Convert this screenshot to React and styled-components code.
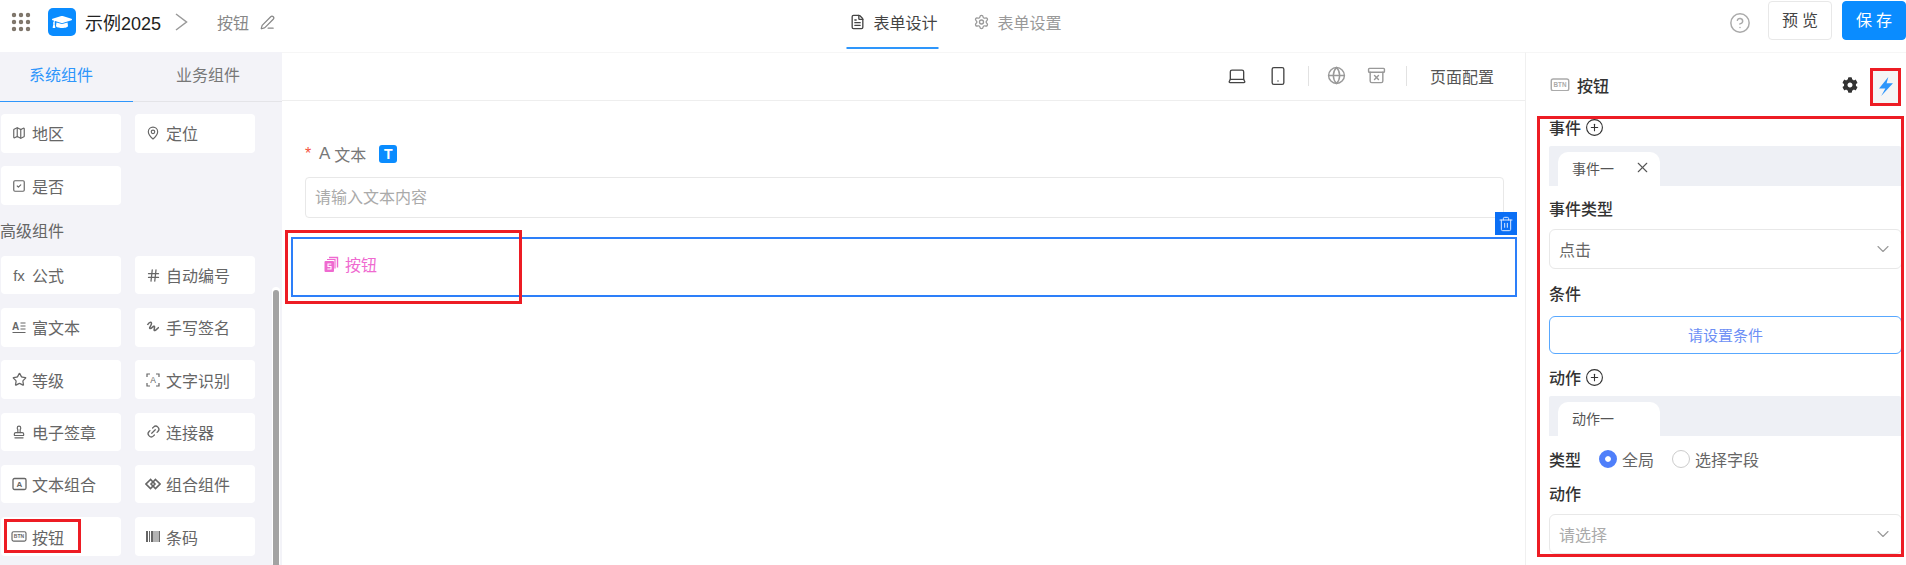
import styled, { createGlobalStyle } from 'styled-components'
import {
  Grip, ChevronDown, PenLine, FileText, Settings, CircleHelp, Laptop, Smartphone,
  Globe, ArchiveX, Map as MapIcon, MapPin, SquareCheck, Hash, Star, Stamp, Link2,
  X, CirclePlus, Trash2,
} from 'lucide-react'
import { FaGraduationCap, FaCog } from 'react-icons/fa'

const BtnIcon = ({ width = 14 }) => (
  <svg width={width} height={width * 0.68} viewBox="0 0 20 14">
    <rect x="1" y="1" width="18" height="12" rx="2" fill="none" stroke="currentColor" strokeWidth="1.5" />
    <text x="10" y="9.6" fontSize="6.5" fontWeight="700" textAnchor="middle" fill="currentColor" fontFamily="Liberation Sans">BTN</text>
  </svg>
)

const RichIcon = () => (
  <svg width="14" height="14" viewBox="0 0 14 14">
    <text x="0" y="9.5" fontSize="10" fontWeight="700" fill="currentColor" fontFamily="Liberation Sans">A</text>
    <path d="M8.5 3h5M8.5 6h5M8.5 9h5M0.5 12.5h13" stroke="currentColor" strokeWidth="1.2" fill="none" />
  </svg>
)

const BoxAIcon = () => (
  <svg width="15" height="14" viewBox="0 0 15 14">
    <rect x="1" y="1.5" width="13" height="11" rx="1.5" fill="none" stroke="currentColor" strokeWidth="1.3" />
    <text x="7.5" y="10" fontSize="8" fontWeight="700" textAnchor="middle" fill="currentColor" fontFamily="Liberation Sans">A</text>
  </svg>
)

const OcrIcon = () => (
  <svg width="14" height="14" viewBox="0 0 14 14">
    <path d="M1 4V1h3M10 1h3v3M13 10v3h-3M4 13H1v-3" fill="none" stroke="currentColor" strokeWidth="1.2" />
    <text x="7" y="10.2" fontSize="8.5" textAnchor="middle" fill="currentColor" fontFamily="Liberation Sans">A</text>
  </svg>
)

const SignIcon = () => (
  <svg width="14" height="14" viewBox="0 0 14 14" fill="none" stroke="currentColor" strokeWidth="1.5">
    <path d="M1.5 5C3 2 5.5 1.5 5.5 3.5S2.5 8 4 8.5 8 5 8.5 6.5 7 11 9 10.5s2.5-3 4-3" />
  </svg>
)

const LinkedIcon = () => (
  <svg width="16" height="12" viewBox="0 0 16 12" fill="none" stroke="currentColor" strokeWidth="1.6">
    <path d="M5.5 1.5 1 6l4.5 4.5L10 6z" />
    <path d="M10.5 1.5 15 6l-4.5 4.5L6 6z" />
  </svg>
)

const BarsIcon = () => (
  <svg width="14" height="11" viewBox="0 0 14 11" fill="currentColor">
    <path d="M0 0h2v11H0zM3 0h1v11H3zM5 0h2.5v11H5zM8.5 0h1v11h-1zM10.5 0h1v11h-1zM12.5 0H14v11h-1.5z" />
  </svg>
)

const PagesIcon = () => (
  <svg width="15" height="17" viewBox="0 0 15 17">
    <path d="M5 1.5h8.5v10" fill="none" stroke="#ef6ad0" strokeWidth="1.4" />
    <path d="M3 3.5h8v9" fill="none" stroke="#ef6ad0" strokeWidth="1.2" />
    <rect x="0.5" y="5" width="9.5" height="11" rx="1" fill="#ef6ad0" />
    <path d="M7.3 8H4v2.5h3V13H3.3" fill="none" stroke="#fff" strokeWidth="1.1" />
  </svg>
)

const CrumbArrow = () => (
  <svg width="13" height="18" viewBox="0 0 13 18" fill="none" stroke="currentColor" strokeWidth="1.5">
    <path d="M1 1l10.5 8L1 17" />
  </svg>
)

const BoltIcon = () => (
  <svg width="14" height="19" viewBox="0 0 11 15" style={{ flex: 'none' }}>
    <path d="M7.3 0 0 9h5l-3.3 6L11 5H6z" fill="#2e96fb" />
  </svg>
)

const App = () => {
  const basicItems = [
    { label: '地区', icon: <MapIcon size={14} /> },
    { label: '定位', icon: <MapPin size={14} /> },
    { label: '是否', icon: <SquareCheck size={14} /> },
  ]

  const advancedItems = [
    { label: '公式', icon: <FxMark>fx</FxMark> },
    { label: '自动编号', icon: <Hash size={15} /> },
    { label: '富文本', icon: <RichIcon /> },
    { label: '手写签名', icon: <SignIcon /> },
    { label: '等级', icon: <Star size={15} /> },
    { label: '文字识别', icon: <OcrIcon /> },
    { label: '电子签章', icon: <Stamp size={14} /> },
    { label: '连接器', icon: <Link2 size={15} style={{ transform: 'rotate(-45deg)' }} /> },
    { label: '文本组合', icon: <BoxAIcon /> },
    { label: '组合组件', icon: <LinkedIcon /> },
    { label: '按钮', icon: <BtnIcon width={16} />, marked: true },
    { label: '条码', icon: <BarsIcon /> },
  ]

  const renderCard = (item) => (
    <Card key={item.label}>
      <CardIcon>{item.icon}</CardIcon>
      {item.label}
      {item.marked && <RedMark $left={3} $top={2} $width={77} $height={34} />}
    </Card>
  )

  return (
    <Page>
      <GlobalStyle />
      <Header>
        <Brand>
          <AppsIcon><Grip size={24} strokeWidth={2.4} /></AppsIcon>
          <Logo><FaGraduationCap size={20} /></Logo>
          <Title>示例2025</Title>
          <Crumb><CrumbArrow /></Crumb>
          <CrumbText>按钮</CrumbText>
          <EditIcon><PenLine size={15} /></EditIcon>
        </Brand>
        <CenterTabs>
          <TopTab $active><FileText size={16} />表单设计</TopTab>
          <TopTab><Settings size={16} />表单设置</TopTab>
        </CenterTabs>
        <Actions>
          <HelpIcon><CircleHelp size={22} strokeWidth={1.6} /></HelpIcon>
          <HeadButton>预览</HeadButton>
          <HeadButton $primary>保存</HeadButton>
        </Actions>
      </Header>

      <Main>
        <Sidebar>
          <SideTabs>
            <SideTab $active>系统组件</SideTab>
            <SideTab>业务组件</SideTab>
          </SideTabs>
          <CardGrid>{basicItems.map(renderCard)}</CardGrid>
          <GroupTitle>高级组件</GroupTitle>
          <CardGrid>{advancedItems.map(renderCard)}</CardGrid>
          <ScrollThumb />
        </Sidebar>

        <Canvas>
          <Toolbar>
            <ToolIcon><Laptop size={20} strokeWidth={1.6} /></ToolIcon>
            <ToolIcon><Smartphone size={20} strokeWidth={1.6} /></ToolIcon>
            <ToolSep />
            <ToolIcon $muted><Globe size={19} strokeWidth={1.8} /></ToolIcon>
            <ToolIcon $muted><ArchiveX size={19} strokeWidth={1.8} /></ToolIcon>
            <ToolSep />
            <ToolText>页面配置</ToolText>
          </Toolbar>
          <FormBody>
            <Field>
              <FieldLabel>
                <Required>*</Required>
                <LabelGlyph>A</LabelGlyph>
                文本
                <TypeBadge>T</TypeBadge>
              </FieldLabel>
              <TextInput>请输入文本内容</TextInput>
            </Field>
            <SelectedBlock>
              <DeleteBadge><Trash2 size={16} strokeWidth={1.5} /></DeleteBadge>
              <PinkLabel><PagesIcon />按钮</PinkLabel>
              <RedMark $left={-8} $top={-9} $width={237} $height={74} />
            </SelectedBlock>
          </FormBody>
        </Canvas>

        <Panel>
          <PanelHead>
            <PanelIcon><BtnIcon width={20} /></PanelIcon>
            <PanelTitle>按钮</PanelTitle>
            <GearIcon><FaCog size={16} /></GearIcon>
            <BoltBox><BoltIcon /></BoltBox>
          </PanelHead>
          <PanelBody>
            <SectionRow $top={-2}>事件<CirclePlus size={19} strokeWidth={1.4} /></SectionRow>
            <TabStrip>
              <StripTab>事件一<X size={17} strokeWidth={1.5} /></StripTab>
            </TabStrip>
            <SectionRow $top={12} $bottom={11}>事件类型</SectionRow>
            <SelectBox>点击<ChevronDown size={20} strokeWidth={1.3} /></SelectBox>
            <SectionRow $top={14} $bottom={13}>条件</SectionRow>
            <OutlineButton>请设置条件</OutlineButton>
            <SectionRow $top={13}>动作<CirclePlus size={19} strokeWidth={1.4} /></SectionRow>
            <TabStrip>
              <StripTab>动作一</StripTab>
            </TabStrip>
            <RadioRow>
              <RadioTitle>类型</RadioTitle>
              <RadioDot $on />全局
              <RadioDot />选择字段
            </RadioRow>
            <SectionRow $top={12} $bottom={11}>动作</SectionRow>
            <SelectBox $placeholder>请选择<ChevronDown size={20} strokeWidth={1.3} /></SelectBox>
          </PanelBody>
        </Panel>
      </Main>
    </Page>
  )
}

const GlobalStyle = createGlobalStyle`
  html, body { margin: 0; padding: 0; background: #fff; }
  body { font-family: "Liberation Sans", "Noto Sans CJK SC", sans-serif; color: #666; }
  * { box-sizing: border-box; }
`

const Page = styled.div`
  width: 1906px;
  height: 565px;
  overflow: hidden;
  display: flex;
  flex-direction: column;
`

const Header = styled.header`
  height: 52px;
  flex: none;
  display: grid;
  grid-template-columns: 1fr auto 1fr;
  align-items: center;
`

const Brand = styled.div`
  display: flex;
  align-items: center;
  padding-bottom: 8px;
`

const AppsIcon = styled.span`
  display: flex;
  margin-left: 9px;
  color: #7d7469;
`

const Logo = styled.span`
  width: 28px;
  height: 28px;
  margin-left: 15px;
  border-radius: 5px;
  background: #0a8cff;
  color: #fff;
  display: flex;
  align-items: center;
  justify-content: center;
`

const Title = styled.span`
  margin-left: 9px;
  font-size: 18px;
  color: #222;
`

const Crumb = styled.span`
  display: flex;
  margin-left: 14px;
  color: #999;
`

const CrumbText = styled.span`
  margin-left: 29px;
  font-size: 16px;
  color: #888;
`

const EditIcon = styled.span`
  display: flex;
  margin-left: 11px;
  color: #888;
`

const CenterTabs = styled.nav`
  display: flex;
  gap: 32px;
  height: 100%;
  transform: translateX(1.5px);
`

const TopTab = styled.div`
  display: flex;
  align-items: center;
  gap: 8px;
  padding: 0 1px 4px 3px;
  font-size: 16px;
  color: ${(p) => (p.$active ? '#444' : '#999')};
  border-bottom: 2px solid ${(p) => (p.$active ? '#2e96fb' : 'transparent')};
  height: 49px;
`

const Actions = styled.div`
  display: flex;
  align-items: center;
  justify-content: flex-end;
  height: 100%;
  padding-bottom: 12px;
`

const HelpIcon = styled.span`
  display: flex;
  margin-right: 17px;
  margin-top: 6px;
  color: #aaa;
`

const HeadButton = styled.button`
  width: 64px;
  height: 39px;
  margin-left: ${(p) => (p.$primary ? '10px' : '0')};
  border: 1px solid ${(p) => (p.$primary ? '#0a8cff' : '#e8e8e8')};
  border-radius: 4px;
  background: ${(p) => (p.$primary ? '#0a8cff' : '#fff')};
  color: ${(p) => (p.$primary ? '#fff' : '#444')};
  font: 16px "Liberation Sans", "Noto Sans CJK SC", sans-serif;
  letter-spacing: 4px;
  padding: 0 0 2px 4px;
`

const Main = styled.main`
  flex: 1;
  min-height: 0;
  display: flex;
`

const Sidebar = styled.aside`
  position: relative;
  width: 282px;
  flex: none;
  background: #f3f3f8;
  overflow: hidden;
`

const SideTabs = styled.div`
  display: flex;
  height: 50px;
  border-bottom: 1px solid #e4e4e8;
  margin-bottom: 12px;
`

const SideTab = styled.div`
  width: 133px;
  height: 50px;
  padding-left: ${(p) => (p.$active ? '29px' : '43px')};
  font-size: 16px;
  line-height: 47px;
  color: ${(p) => (p.$active ? '#2e96fb' : '#777')};
  border-bottom: 1px solid ${(p) => (p.$active ? '#2e96fb' : 'transparent')};
`

const CardGrid = styled.div`
  display: grid;
  grid-template-columns: 120px 120px;
  gap: 13.8px 14px;
  padding-left: 1px;
`

const Card = styled.div`
  position: relative;
  height: 38.5px;
  display: flex;
  align-items: center;
  background: #fff;
  border-radius: 4px;
  font-size: 16px;
  color: #666;
`

const CardIcon = styled.span`
  width: 31px;
  flex: none;
  display: flex;
  justify-content: center;
  padding-left: 5px;
  color: #666;
`

const FxMark = styled.span`
  font-size: 15px;
  line-height: 1;
`

const GroupTitle = styled.div`
  font-size: 16px;
  line-height: 24px;
  margin: 15px 0 12px;
  color: #666;
`

const ScrollThumb = styled.div`
  position: absolute;
  right: 3px;
  top: 238px;
  bottom: 0;
  width: 6px;
  border-radius: 3px 3px 0 0;
  background: #a3a3a3;
  box-shadow: 0 -2px 0 1px #fff;
`

const RedMark = styled.span`
  position: absolute;
  left: ${(p) => p.$left}px;
  top: ${(p) => p.$top}px;
  width: ${(p) => p.$width}px;
  height: ${(p) => p.$height}px;
  border: 3px solid #ed1c24;
  pointer-events: none;
`

const Canvas = styled.section`
  flex: 1;
  min-width: 0;
`

const Toolbar = styled.div`
  height: 49px;
  display: flex;
  align-items: center;
  justify-content: flex-end;
  padding-right: 31px;
  padding-bottom: 2px;
  border-bottom: 1px solid #eee;
  border-top: 1px solid #f6f6f6;
`

const ToolIcon = styled.span`
  display: flex;
  margin-left: 21px;
  color: ${(p) => (p.$muted ? '#999' : '#444')};
`

const ToolSep = styled.span`
  width: 1px;
  height: 20px;
  margin-left: 20px;
  margin-right: -3px;
  background: #e2e2e2;
`

const ToolText = styled.span`
  margin-left: 26px;
  font-size: 16px;
  color: #555;
`

const FormBody = styled.div`
  padding: 0 8px 0 9px;
`

const Field = styled.div`
  padding: 42px 13px 19px 14px;
`

const FieldLabel = styled.div`
  display: flex;
  align-items: center;
  height: 22px;
  margin-bottom: 12px;
  font-size: 16px;
  color: #777;
`

const Required = styled.span`
  width: 14px;
  color: #f5533d;
`

const LabelGlyph = styled.span`
  font-size: 17px;
  margin-right: 4px;
`

const TypeBadge = styled.span`
  width: 18px;
  height: 18px;
  margin-left: 13px;
  border-radius: 3px;
  background: #0a8cff;
  color: #fff;
  font-size: 14px;
  font-weight: 700;
  display: flex;
  align-items: center;
  justify-content: center;
`

const TextInput = styled.div`
  height: 41px;
  line-height: 39px;
  padding-left: 9px;
  border: 1px solid #e8e8e8;
  border-radius: 4px;
  font-size: 16px;
  color: #aaa;
`

const SelectedBlock = styled.div`
  position: relative;
  height: 60px;
  border: 2px solid #2d7ff9;
  display: flex;
  align-items: center;
  padding: 0 0 6px 31px;
`

const DeleteBadge = styled.span`
  position: absolute;
  right: -2px;
  top: -27px;
  width: 22px;
  height: 23px;
  background: #0b6ff5;
  color: #dbe9ff;
  display: flex;
  align-items: center;
  justify-content: center;
`

const PinkLabel = styled.div`
  display: flex;
  align-items: center;
  gap: 6px;
  font-size: 16px;
  color: #ef6ad0;
`

const Panel = styled.aside`
  width: 381px;
  flex: none;
  border-left: 1px solid #f0f0f0;
  border-top: 1px solid #f6f6f6;
`

const PanelHead = styled.div`
  height: 63px;
  padding-left: 24px;
  display: flex;
  align-items: center;
`

const PanelIcon = styled.span`
  display: flex;
  color: #aaa;
`

const PanelTitle = styled.span`
  flex: 1;
  margin-left: 7px;
  font-size: 16px;
  font-weight: 500;
  color: #333;
`

const GearIcon = styled.span`
  display: flex;
  margin-right: 12px;
  color: #333;
`

const BoltBox = styled.span`
  width: 31px;
  height: 38px;
  margin-right: 5px;
  margin-top: 4px;
  border: 3px solid #ed1c24;
  background: #f5f5f5;
  display: flex;
  align-items: center;
  justify-content: center;
`

const PanelBody = styled.div`
  height: 441px;
  margin-left: 11px;
  margin-right: 2px;
  padding: 0 0 0 9px;
  border: 3px solid #ed1c24;
  overflow: hidden;
`

const SectionRow = styled.div`
  display: flex;
  align-items: center;
  gap: 4px;
  height: 20px;
  margin-top: ${(p) => p.$top || 0}px;
  margin-bottom: ${(p) => p.$bottom || 10}px;
  font-size: 16px;
  font-weight: 500;
  color: #333;
`

const TabStrip = styled.div`
  height: 40px;
  margin-top: -1px;
  background: #eef0f5;
  padding: 6px 0 0 9px;
  border-radius: 2px 2px 0 0;
`

const StripTab = styled.div`
  width: 102px;
  height: 34px;
  padding: 0 9px 3px 14px;
  display: flex;
  align-items: center;
  justify-content: space-between;
  background: #fff;
  border-radius: 10px 10px 0 0;
  font-size: 14px;
  color: #555;
`

const SelectBox = styled.div`
  height: 40px;
  margin-right: -1px;
  padding: 0 8px 0 9px;
  display: flex;
  align-items: center;
  justify-content: space-between;
  border: 1px solid #e8e8e8;
  border-radius: 6px;
  font-size: 16px;
  color: ${(p) => (p.$placeholder ? '#aaa' : '#666')};

  svg { color: #999; }
`

const OutlineButton = styled.div`
  height: 38px;
  margin-right: -1px;
  padding-bottom: 2px;
  display: flex;
  align-items: center;
  justify-content: center;
  border: 1px solid #58a8ff;
  border-radius: 6px;
  font-size: 15px;
  color: #6d8ff5;
`

const RadioRow = styled.div`
  display: flex;
  align-items: center;
  height: 24px;
  margin-top: 11px;
  font-size: 16px;
  color: #666;
`

const RadioTitle = styled.span`
  width: 50px;
  font-weight: 500;
  color: #333;
`

const RadioDot = styled.span`
  width: 18px;
  height: 18px;
  margin-right: 5px;
  margin-left: ${(p) => (p.$on ? '0' : '18px')};
  border-radius: 50%;
  background: ${(p) => (p.$on ? '#4f7ffa' : '#fff')};
  border: ${(p) => (p.$on ? '6px solid #4f7ffa' : '1px solid #ccc')};
  box-shadow: ${(p) => (p.$on ? 'inset 0 0 0 3px #fff' : 'none')};
`

export default App
